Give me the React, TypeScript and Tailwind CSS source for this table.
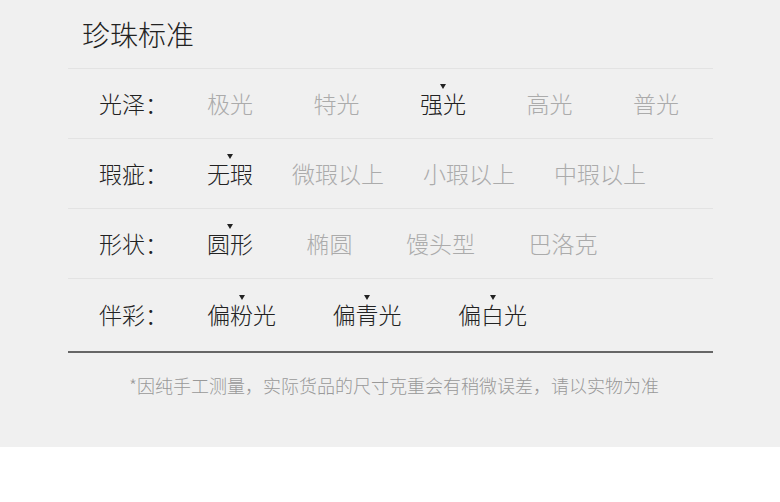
import React from 'react';

const font = { fontFamily: '"Noto Sans CJK SC", "Noto Sans", sans-serif' };

type Row = { label: string; options: string[]; selected: number; gap: string; tall?: boolean };

const rows: Row[] = [
  { label: '光泽', options: ['极光', '特光', '强光', '高光', '普光'], selected: 2, gap: 'gap-[60.5px]' },
  { label: '瑕疵', options: ['无瑕', '微瑕以上', '小瑕以上', '中瑕以上'], selected: 0, gap: 'gap-[39px]' },
  { label: '形状', options: ['圆形', '椭圆', '馒头型', '巴洛克'], selected: 0, gap: 'gap-[53.5px]' },
  { label: '伴彩', options: ['偏粉光', '偏青光', '偏白光'], selected: -1, gap: 'gap-[56.5px]', tall: true },
];

const Option: React.FC<{ text: string; active: boolean }> = ({ text, active }) => (
  <span className={`relative leading-[23px] ${active ? 'text-[#222]' : 'text-[#ababab]'}`}>
    {active && (
      <span className="absolute left-1/2 -translate-x-1/2 top-[-8px] w-0 h-0 border-l-[3.5px] border-r-[3.5px] border-t-[5px] border-l-transparent border-r-transparent border-t-[#222]" />
    )}
    {text}
  </span>
);

const App: React.FC = () => {
  return (
    <div className="w-[780px] h-[502px] bg-white font-light" style={font}>
      <div className="h-[447px] bg-[#f0f0f0]">
        <div className="h-[68px] flex items-center pl-[82px] text-[28px] text-[#222]">珍珠标准</div>
        <div className="mx-[68px] w-[645px]">
          {rows.map((row) => (
            <div
              key={row.label}
              className={`flex items-center border-t border-[#e3e3e3] text-[23px] ${row.tall ? 'h-[75px] pb-[2px] border-b-2 border-b-[#666]' : 'h-[70px]'}`}
            >
              <span className="w-[139px] pl-[31px] text-[#222] leading-[23px]">{row.label}：</span>
              <div className={`flex ${row.gap}`}>
                {row.options.map((o, i) => (
                  <Option
                    key={o}
                    text={o}
                    active={row.selected === -1 ? true : i === row.selected}
                  />
                ))}
              </div>
            </div>
          ))}
        </div>
        <p className="pt-[19px] text-center text-[18px] leading-[26px] text-[#999] pl-[8px]">
          *因纯手工测量，实际货品的尺寸克重会有稍微误差，请以实物为准
        </p>
      </div>
    </div>
  );
};

export default App;
